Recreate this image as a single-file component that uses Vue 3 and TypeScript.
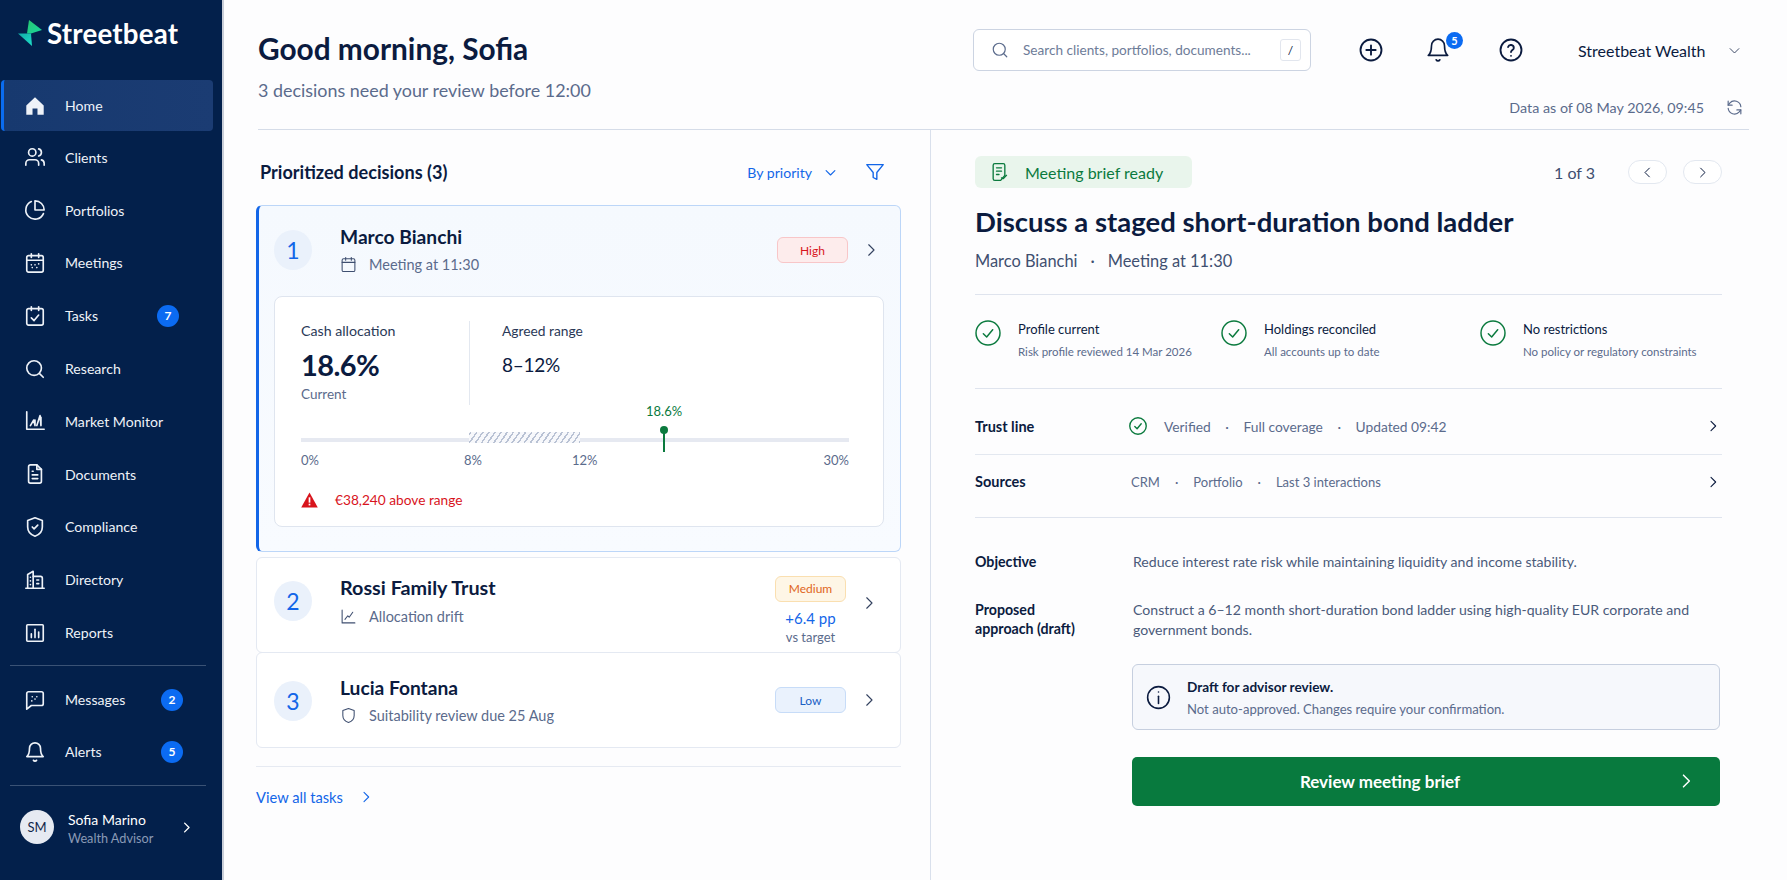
<script setup lang="ts">
import { h } from 'vue';

type IconProps = { d: string[]; size?: number; sw?: number; fill?: boolean };

// small stroke icon, all paths on a 24 grid
const Ico = (props: IconProps) =>
  h(
    'svg',
    {
      width: props.size ?? 20,
      height: props.size ?? 20,
      viewBox: '0 0 24 24',
      fill: props.fill ? 'currentColor' : 'none',
      stroke: props.fill ? 'none' : 'currentColor',
      'stroke-width': props.sw ?? 1.8,
      'stroke-linecap': 'round',
      'stroke-linejoin': 'round',
      style: { flex: 'none', display: 'block' },
    },
    props.d.map((p) => h('path', { d: p })),
  );

const calendarBox = 'M5 4h14a2 2 0 0 1 2 2v14a2 2 0 0 1-2 2H5a2 2 0 0 1-2-2V6a2 2 0 0 1 2-2z';
const chevronRight = ['M9 5l7 7-7 7'];
const chevronDown = ['M5 9l7 7 7-7'];
const circle = 'M3 12a9 9 0 1 0 18 0a9 9 0 1 0-18 0';
const bell = ['M6 8a6 6 0 0 1 12 0c0 7 3 9 3 9H3s3-2 3-9', 'M10.3 21a1.94 1.94 0 0 0 3.4 0'];
const tick = 'M8.5 12.5l2.5 2.5 4.5-5.5';

const icons = {
  home: ['M2.5 11.4 12 2.5l9.5 8.9v10.1h-6.8v-6.8H9.3v6.8H2.5z'],
  clients: [
    'M16 21v-2a4 4 0 0 0-4-4H6a4 4 0 0 0-4 4v2',
    'M5 7a4 4 0 1 0 8 0a4 4 0 1 0-8 0',
    'M22 21v-2a4 4 0 0 0-3-3.87',
    'M16 3.13a4 4 0 0 1 0 7.75',
  ],
  portfolios: ['M21.2 15.9A10 10 0 1 1 8 2.8', 'M22 12A10 10 0 0 0 12 2v10z'],
  meetings: [calendarBox, 'M8 2v4', 'M16 2v4', 'M3 9h18', 'M8 14h.01', 'M12 14h.01', 'M16 13h.01', 'M9 17h.01', 'M14 17h.01'],
  tasks: [calendarBox, 'M8 2v4', 'M16 2v4', 'M8 14l3 3 5-6'],
  research: ['M3 11a8 8 0 1 0 16 0a8 8 0 1 0-16 0', 'M21 21l-4.3-4.3'],
  market: ['M3 2v19h19', 'M7 17l3.5-6 1.5 6V11', 'M14 17l3.5-11 1 11V8'],
  documents: ['M14 2H7a2 2 0 0 0-2 2v16a2 2 0 0 0 2 2h10a2 2 0 0 0 2-2V7z', 'M14 2v5h5', 'M9 13h6', 'M9 17h6', 'M9 9h1'],
  compliance: ['M12 2l8 3v7c0 5-3.5 8.5-8 10-4.5-1.5-8-5-8-10V5z', 'M9 12l2 2 4-4'],
  directory: ['M2 21h20', 'M4 21V6l6-3.5V21', 'M10 8h8a2 2 0 0 1 2 2v11', 'M7 9h.01', 'M7 13h.01', 'M7 17h.01', 'M14 12h2', 'M14 16h2'],
  reports: ['M4 3h16a1 1 0 0 1 1 1v16a1 1 0 0 1-1 1H4a1 1 0 0 1-1-1V4a1 1 0 0 1 1-1z', 'M8 17v-4', 'M12 17V8', 'M16 17v-6'],
  messages: ['M21 16a2 2 0 0 1-2 2H8l-5 4V5a2 2 0 0 1 2-2h14a2 2 0 0 1 2 2z', 'M9 8.5h.01', 'M14 8.5h.01', 'M12 11h.01', 'M8.5 13h.01'],
};

const mainNav = [
  { label: 'Home', d: icons.home, active: true, fill: true },
  { label: 'Clients', d: icons.clients },
  { label: 'Portfolios', d: icons.portfolios },
  { label: 'Meetings', d: icons.meetings },
  { label: 'Tasks', d: icons.tasks, badge: '7' },
  { label: 'Research', d: icons.research },
  { label: 'Market Monitor', d: icons.market },
  { label: 'Documents', d: icons.documents },
  { label: 'Compliance', d: icons.compliance },
  { label: 'Directory', d: icons.directory },
  { label: 'Reports', d: icons.reports },
];

const subNav = [
  { label: 'Messages', d: icons.messages, badge: '2' },
  { label: 'Alerts', d: bell, badge: '5' },
];

const checks = [
  { title: 'Profile current', sub: 'Risk profile reviewed 14 Mar 2026' },
  { title: 'Holdings reconciled', sub: 'All accounts up to date' },
  { title: 'No restrictions', sub: 'No policy or regulatory constraints' },
];
</script>

<template>
  <div class="app">
    <aside class="sidebar">
      <div class="brand">
        <svg class="logo" width="26" height="28" viewBox="0 0 26 28">
          <defs>
            <linearGradient id="logoTop" x1="0" y1="0" x2="1" y2="1">
              <stop offset="0" stop-color="#27c66f" />
              <stop offset="1" stop-color="#19d6a0" />
            </linearGradient>
            <linearGradient id="logoBottom" x1="0" y1="0" x2="1" y2="1">
              <stop offset="0" stop-color="#10a9a5" />
              <stop offset="1" stop-color="#1fe0c8" />
            </linearGradient>
          </defs>
          <path d="M12 1 25 11 14 14.5H10z" fill="url(#logoTop)" />
          <path d="M1 14.5H14L15 27z" fill="url(#logoBottom)" />
        </svg>
        <span class="brand-name">Streetbeat</span>
      </div>

      <nav class="nav">
        <a v-for="item in mainNav" :key="item.label" class="nav-item" :class="{ active: item.active }">
          <Ico :d="item.d" :size="22" :fill="item.fill" />
          <span class="nav-label">{{ item.label }}</span>
          <span v-if="item.badge" class="nav-badge tasks-badge">{{ item.badge }}</span>
        </a>
      </nav>
      <div class="side-rule first"></div>
      <nav class="nav">
        <a v-for="item in subNav" :key="item.label" class="nav-item short">
          <Ico :d="item.d" :size="22" />
          <span class="nav-label">{{ item.label }}</span>
          <span class="nav-badge">{{ item.badge }}</span>
        </a>
      </nav>
      <div class="side-rule second"></div>
      <div class="user">
        <div class="avatar">SM</div>
        <div class="user-text">
          <div class="user-name">Sofia Marino</div>
          <div class="user-role">Wealth Advisor</div>
        </div>
        <Ico :d="chevronRight" :size="15" :sw="2.2" />
      </div>
    </aside>

    <main class="main">
      <header class="header">
        <div class="greet">
          <h1>Good morning, Sofia</h1>
          <p>3 decisions need your review before 12:00</p>
        </div>
        <div class="header-right">
          <div class="toolbar">
            <div class="search">
              <Ico class="search-icon" :d="icons.research" :size="18" :sw="1.6" />
              <span class="search-text">Search clients, portfolios, documents...</span>
              <span class="kbd">/</span>
            </div>
            <Ico class="tool plus" :d="[circle, 'M12 8v8', 'M8 12h8']" :size="28" :sw="1.6" />
            <div class="bell-wrap">
              <Ico :d="bell" :size="26" :sw="1.5" />
              <span class="bell-badge">5</span>
            </div>
            <Ico class="tool help" :d="[circle, 'M9.5 9.5a2.5 2.5 0 0 1 4.9.7c0 1.7-2.4 2-2.4 3.6', 'M12 17h.01']" :size="28" :sw="1.6" />
            <span class="org">Streetbeat Wealth</span>
            <Ico class="org-chevron" :d="chevronDown" :size="15" :sw="1.5" />
          </div>
          <div class="data-row">
            <span>Data as of 08 May 2026, 09:45</span>
            <Ico
              :d="['M20 11a8 8 0 0 0-14-4.5L4 9', 'M4 4v5h5', 'M4 13a8 8 0 0 0 14 4.5L20 15', 'M20 20v-5h-5']"
              :size="19"
              :sw="1.5"
            />
          </div>
        </div>
      </header>

      <div class="panes">
        <section class="left">
          <div class="left-head">
            <h2>Prioritized decisions (3)</h2>
            <div class="sort">
              <span>By priority</span>
              <Ico :d="chevronDown" :size="15" />
              <Ico class="filter" :d="['M3 4h18l-7 8.5V20l-4-2v-5.5z']" :size="22" :sw="1.5" />
            </div>
          </div>

          <article class="card first-card">
            <div class="card-row">
              <div class="rank">1</div>
              <div class="who">
                <div class="who-name">Marco Bianchi</div>
                <div class="who-sub">
                  <Ico :d="[calendarBox, 'M8 2v4', 'M16 2v4', 'M3 9h18']" :size="17" :sw="1.5" />
                  <span>Meeting at 11:30</span>
                </div>
              </div>
              <div class="side">
                <span class="prio high">High</span>
              </div>
              <Ico class="card-chevron" :d="chevronRight" :size="18" :sw="1.5" />
            </div>

            <div class="alloc">
              <div class="metrics">
                <div class="metric cash">
                  <div class="metric-label">Cash allocation</div>
                  <div class="metric-big">18.6%</div>
                  <div class="metric-note">Current</div>
                </div>
                <div class="metric range">
                  <div class="metric-label">Agreed range</div>
                  <div class="metric-mid">8–12%</div>
                </div>
              </div>
              <div class="slider">
                <span class="pin-label">18.6%</span>
                <div class="track"></div>
                <div class="hatch"></div>
                <div class="pin"></div>
              </div>
              <div class="ticks">
                <span>0%</span>
                <span>8%</span>
                <span>12%</span>
                <span>30%</span>
              </div>
              <div class="warn">
                <svg width="17" height="16" viewBox="0 0 16 15">
                  <path d="M8 .5 15.8 14.5H.2z" fill="#d8141c" />
                  <rect x="7.2" y="5" width="1.6" height="5" fill="#fff" />
                  <rect x="7.2" y="11" width="1.6" height="1.6" fill="#fff" />
                </svg>
                <span>€38,240 above range</span>
              </div>
            </div>
          </article>

          <article class="card second-card">
            <div class="rank">2</div>
            <div class="who">
              <div class="who-name">Rossi Family Trust</div>
              <div class="who-sub">
                <Ico :d="['M3 3v18h18', 'M7 16l4-5 2 2 5-7']" :size="17" :sw="1.5" />
                <span>Allocation drift</span>
              </div>
            </div>
            <div class="side">
              <span class="prio medium">Medium</span>
              <span class="delta">+6.4 pp</span>
              <span class="delta-note">vs target</span>
            </div>
            <Ico class="card-chevron" :d="chevronRight" :size="18" :sw="1.5" />
          </article>

          <article class="card third-card">
            <div class="rank">3</div>
            <div class="who">
              <div class="who-name">Lucia Fontana</div>
              <div class="who-sub">
                <Ico :d="['M12 2l8 3v7c0 5-3.5 8.5-8 10-4.5-1.5-8-5-8-10V5z']" :size="17" :sw="1.5" />
                <span>Suitability review due 25 Aug</span>
              </div>
            </div>
            <div class="side">
              <span class="prio low">Low</span>
            </div>
            <Ico class="card-chevron" :d="chevronRight" :size="18" :sw="1.5" />
          </article>

          <div class="view-all">
            <span>View all tasks</span>
            <Ico :d="chevronRight" :size="16" :sw="1.6" />
          </div>
        </section>

        <section class="right">
          <div class="right-head">
            <div class="ready">
              <Ico
                :d="['M7 2h10a2 2 0 0 1 2 2v12l-5 6H7a2 2 0 0 1-2-2V4a2 2 0 0 1 2-2z', 'M9 7h6', 'M9 11h6', 'M9 15h3', 'M15 19l2 1 4-4']"
                :size="20"
                :sw="1.6"
              />
              <span>Meeting brief ready</span>
            </div>
            <div class="pager">
              <span>1 of 3</span>
              <button class="page-btn"><Ico :d="['M15 5l-7 7 7 7']" :size="15" :sw="1.6" /></button>
              <button class="page-btn"><Ico :d="chevronRight" :size="15" :sw="1.6" /></button>
            </div>
          </div>

          <h2 class="brief-title">Discuss a staged short-duration bond ladder</h2>
          <div class="brief-sub">
            <span>Marco Bianchi</span><i>·</i><span>Meeting at 11:30</span>
          </div>

          <div class="checks">
            <div v-for="c in checks" :key="c.title" class="check">
              <Ico class="ok" :d="[circle, tick]" :size="32" :sw="1.1" />
              <div>
                <div class="check-title">{{ c.title }}</div>
                <div class="check-sub">{{ c.sub }}</div>
              </div>
            </div>
          </div>

          <div class="line-row trust">
            <div class="line-label">Trust line</div>
            <div class="line-body">
              <Ico class="ok" :d="[circle, tick]" :size="22" :sw="1.5" />
              <span class="after-ok">Verified</span><i>·</i><span>Full coverage</span><i>·</i><span>Updated 09:42</span>
            </div>
            <Ico class="line-chevron" :d="chevronRight" :size="16" :sw="1.6" />
          </div>
          <div class="line-row sources">
            <div class="line-label">Sources</div>
            <div class="line-body src">
              <span>CRM</span><i>·</i><span>Portfolio</span><i>·</i><span>Last 3 interactions</span>
            </div>
            <Ico class="line-chevron" :d="chevronRight" :size="16" :sw="1.6" />
          </div>

          <div class="detail objective">
            <div class="detail-label">Objective</div>
            <div class="detail-text">Reduce interest rate risk while maintaining liquidity and income stability.</div>
          </div>
          <div class="detail approach">
            <div class="detail-label">Proposed<br />approach (draft)</div>
            <div class="detail-text">Construct a 6–12 month short-duration bond ladder using high-quality EUR corporate and government bonds.</div>
          </div>

          <div class="note">
            <Ico :d="[circle, 'M12 11v6', 'M12 7.5h.01']" :size="29" :sw="1.3" />
            <div class="note-body">
              <div class="note-title">Draft for advisor review.</div>
              <div class="note-sub">Not auto-approved. Changes require your confirmation.</div>
            </div>
          </div>

          <button class="review">
            <span>Review meeting brief</span>
            <Ico class="review-chevron" :d="chevronRight" :size="20" :sw="1.8" />
          </button>
        </section>
      </div>
    </main>
  </div>
</template>

<style>
html,
body {
  margin: 0;
  background: #fdfdfe;
}
</style>

<style scoped>
.app {
  display: flex;
  width: 1787px;
  height: 880px;
  overflow: hidden;
  font-family: Lato, "Open Sans", sans-serif;
  color: #0b1b3f;
  background: #fdfdfe;
}

h1,
h2,
p {
  margin: 0;
}

/* sidebar */
.sidebar {
  flex: none;
  box-sizing: border-box;
  width: 224px;
  height: 880px;
  background: #03204b;
  border-right: 2px solid #c9ced8;
  color: #fff;
}

.brand {
  display: flex;
  align-items: center;
  height: 80px;
  padding: 0 0 14px 17px;
  box-sizing: border-box;
}

.brand-name {
  margin-left: 4px;
  font-size: 27.7px;
  font-weight: 700;
  letter-spacing: 0.2px;
}

.nav {
  display: flex;
  flex-direction: column;
}

.nav-item {
  display: flex;
  align-items: center;
  box-sizing: border-box;
  height: 52.8px;
  padding-left: 24px;
  font-size: 14.1px;
  color: #eef2f8;
}

.nav-item.short {
  height: 52px;
}

.nav-item.active {
  width: 212px;
  height: 51px;
  margin-left: 1px;
  padding-left: 20px;
  background: linear-gradient(90deg, #17396f, #1b3c73);
  border-left: 3px solid #0a6cf0;
  border-radius: 4px;
}

.nav-label {
  margin-left: 19px;
}

.nav-badge {
  display: flex;
  align-items: center;
  justify-content: center;
  width: 22px;
  height: 22px;
  margin-left: auto;
  margin-right: 39px;
  border-radius: 50%;
  background: #0b6bf2;
  font-size: 12px;
  font-weight: 700;
  color: #fff;
}

.tasks-badge {
  margin-right: 43px;
}

.side-rule {
  height: 1px;
  margin-left: 10px;
  width: 196px;
  background: #3a5275;
}

.side-rule.first {
  margin-top: 6px;
  margin-bottom: 8px;
}

.side-rule.second {
  margin-top: 7px;
}

.user {
  display: flex;
  align-items: center;
  padding: 22px 0 0 20px;
}

.avatar {
  display: flex;
  align-items: center;
  justify-content: center;
  width: 34px;
  height: 34px;
  border-radius: 50%;
  background: #e6eaf2;
  color: #12264b;
  font-size: 13px;
}

.user-text {
  width: 111px;
  margin: 3px 0 0 14px;
}

.user-name {
  font-size: 14px;
  line-height: 18px;
}

.user-role {
  font-size: 12.7px;
  line-height: 18px;
  color: #8a9ab5;
}

/* main */
.main {
  flex: 1;
  min-width: 0;
  padding: 0 38px 0 34px;
  display: flex;
  flex-direction: column;
}

.header {
  flex: none;
  display: flex;
  justify-content: space-between;
  box-sizing: border-box;
  height: 130px;
  border-bottom: 1px solid #d5dce8;
}

.greet {
  padding-top: 29px;
}

.greet h1 {
  font-size: 29.8px;
  line-height: 40px;
  font-weight: 700;
  color: #0b1b3f;
}

.greet p {
  margin-top: 10px;
  font-size: 17.9px;
  line-height: 22px;
  color: #5b6b8c;
}

.header-right {
  width: 776px;
  padding-top: 29px;
}

.toolbar {
  display: flex;
  align-items: center;
  height: 42px;
}

.search {
  display: flex;
  align-items: center;
  box-sizing: border-box;
  width: 338px;
  height: 42px;
  padding: 0 9px 0 17px;
  background: #fff;
  border: 1.5px solid #ccd4e2;
  border-radius: 6px;
  color: #5b6b8c;
}

.search-text {
  margin-left: 14px;
  font-size: 13.6px;
  color: #6e7c98;
}

.kbd {
  display: flex;
  align-items: center;
  justify-content: center;
  width: 19px;
  height: 20px;
  margin-left: auto;
  border: 1px solid #e2e6ee;
  border-radius: 3px;
  font-size: 12px;
  color: #0b1b3f;
}

.plus {
  margin-left: 46px;
}

.bell-wrap {
  position: relative;
  margin-left: 40px;
}

.bell-badge {
  position: absolute;
  top: -5px;
  left: 21px;
  display: flex;
  align-items: center;
  justify-content: center;
  width: 17px;
  height: 17px;
  border-radius: 50%;
  background: #0b6bf2;
  color: #fff;
  font-size: 11px;
  font-weight: 700;
}

.help {
  margin-left: 46px;
}

.org {
  margin-left: 53px;
  font-size: 16px;
}

.org-chevron {
  margin-left: 21px;
  color: #33415f;
}

.data-row {
  display: flex;
  align-items: center;
  justify-content: flex-end;
  gap: 21px;
  margin-top: 26px;
  padding-right: 5px;
  height: 20px;
  font-size: 14.3px;
  color: #5b6b8c;
}

.panes {
  flex: 1;
  display: flex;
  min-height: 0;
}

/* left pane */
.left {
  flex: none;
  box-sizing: border-box;
  width: 673px;
  padding: 30px 31px 0 0;
  border-right: 1px solid #d9e0ec;
}

.left-head {
  display: flex;
  align-items: center;
  justify-content: space-between;
  height: 24px;
  padding: 0 13px 0 2px;
}

.left-head h2 {
  font-size: 18.1px;
  font-weight: 700;
}

.sort {
  display: flex;
  align-items: center;
  font-size: 14.1px;
  color: #1366e8;
}

.sort svg:nth-of-type(1) {
  margin-left: 11px;
}

.filter {
  margin-left: 26px;
}

.card {
  box-sizing: border-box;
  width: 645px;
  margin-left: -2px;
  background: #fff;
  border: 1px solid #e4e9f2;
  border-radius: 6px;
}

.first-card {
  height: 347px;
  margin-top: 21px;
  padding: 18px 16px 0 15px;
  background: linear-gradient(180deg, #f5f9fe, #f8fbff);
  border: 1px solid #bcd6f8;
  border-left: 3px solid #1366e8;
}

.card-row,
.second-card,
.third-card {
  display: flex;
  align-items: center;
}

.card-row {
  height: 52px;
}

.second-card {
  height: 96px;
  margin-top: 5px;
  padding: 0 22px 0 17px;
}

.third-card {
  height: 96px;
  margin-top: -1px;
  padding: 0 22px 0 17px;
}

.rank {
  flex: none;
  display: flex;
  align-items: center;
  justify-content: center;
  width: 38px;
  height: 40px;
  border-radius: 50%;
  background: #eaf1fb;
  color: #1366e8;
  font-size: 23px;
}

.second-card .rank {
  margin-top: -8px;
}

.third-card .rank {
  margin-top: 2px;
}

.who {
  flex: 1;
  margin-left: 28px;
}

.second-card .who {
  margin-top: -8px;
}

.third-card .who {
  margin-top: 2px;
}

.who-name {
  font-size: 19.2px;
  line-height: 24px;
  font-weight: 700;
  color: #0b1b3f;
}

.second-card .who-name {
  font-size: 19.8px;
}

.who-sub {
  display: flex;
  align-items: center;
  gap: 12px;
  margin-top: 5px;
  font-size: 14.5px;
  line-height: 22px;
  color: #5b6b8c;
}

.second-card .who-sub {
  margin-top: 7px;
}

.who-sub svg {
  color: #3f4f70;
}

.side {
  display: flex;
  flex-direction: column;
  align-items: center;
  width: 71px;
}

.second-card .side {
  margin-top: 11px;
}

.prio {
  box-sizing: border-box;
  display: flex;
  align-items: center;
  justify-content: center;
  width: 71px;
  height: 26px;
  border-radius: 6px;
  font-size: 12px;
  border: 1px solid;
}

.high {
  background: #fdecec;
  border-color: #f8c6c8;
  color: #d8141c;
}

.medium {
  background: #fef6e6;
  border-color: #fadfb0;
  color: #e0651a;
}

.low {
  background: #eaf2fd;
  border-color: #c7dcf8;
  color: #1a5fc4;
}

.delta {
  margin-top: 6px;
  font-size: 15px;
  line-height: 20px;
  color: #1366e8;
}

.delta-note {
  font-size: 13px;
  line-height: 18px;
  color: #5b6b8c;
}

.card-chevron {
  margin-left: 14px;
  color: #33415f;
}

.first-card .card-chevron {
  margin-right: 4px;
}

.second-card .card-chevron {
  margin-bottom: 4px;
}

.alloc {
  box-sizing: border-box;
  height: 231px;
  margin-top: 20px;
  padding: 24px 34px 0 26px;
  background: #fff;
  border: 1.5px solid #dfe5ef;
  border-radius: 8px;
}

.metrics {
  display: flex;
  height: 84px;
}

.metric.cash {
  box-sizing: border-box;
  width: 169px;
  border-right: 1px solid #e3e8f0;
}

.metric.range {
  padding-left: 32px;
}

.metric-label {
  font-size: 14.2px;
  line-height: 20px;
  color: #2a3957;
}

.range .metric-label {
  font-size: 13.8px;
}

.metric-big {
  margin-top: 4px;
  font-size: 29px;
  line-height: 40px;
  font-weight: 700;
  letter-spacing: -0.6px;
}

.metric-mid {
  margin-top: 4px;
  font-size: 19px;
  line-height: 40px;
  letter-spacing: -0.3px;
}

.metric-note {
  font-size: 13.5px;
  line-height: 18px;
  color: #5b6b8c;
}

.slider {
  position: relative;
  height: 47px;
}

.track {
  position: absolute;
  left: 0;
  right: 0;
  top: 33px;
  height: 4px;
  background: #e6e9f1;
}

.hatch {
  position: absolute;
  left: 168px;
  top: 27px;
  width: 111px;
  height: 11px;
  background: repeating-linear-gradient(-55deg, #b9c2d4 0 1.5px, transparent 1.5px 5px), #f7f8fb;
}

.pin {
  position: absolute;
  left: 359px;
  top: 21px;
  width: 8px;
  height: 8px;
  border-radius: 50%;
  background: #0b7a3e;
}

.pin::after {
  content: "";
  position: absolute;
  left: 3px;
  top: 6px;
  width: 2px;
  height: 20px;
  background: #0b7a3e;
}

.pin-label {
  position: absolute;
  left: 345px;
  top: -3px;
  font-size: 13px;
  line-height: 18px;
  color: #0b7a3e;
}

.ticks {
  display: grid;
  grid-template-columns: 163px 108px 1fr auto;
  font-size: 13px;
  line-height: 16px;
  color: #5b6b8c;
}

.warn {
  display: flex;
  align-items: center;
  gap: 17px;
  margin-top: 22px;
  font-size: 13.7px;
  line-height: 20px;
  color: #d8141c;
}

.view-all {
  display: flex;
  align-items: center;
  gap: 15px;
  width: 645px;
  margin: 18px 0 0 -2px;
  box-sizing: border-box;
  height: 60px;
  border-top: 1px solid #e6eaf2;
  font-size: 14.7px;
  color: #1366e8;
}

/* right pane */
.right {
  flex: 1;
  min-width: 0;
  padding: 26px 27px 0 44px;
}

.right-head {
  display: flex;
  align-items: center;
  justify-content: space-between;
  height: 32px;
}

.ready {
  display: flex;
  align-items: center;
  gap: 16px;
  box-sizing: border-box;
  width: 217px;
  height: 32px;
  padding-left: 14px;
  border-radius: 6px;
  background: #e9f5ec;
  color: #0b7a3e;
  font-size: 16px;
}

.pager {
  display: flex;
  align-items: center;
  font-size: 16px;
  color: #3f4f70;
}

.page-btn {
  display: flex;
  align-items: center;
  justify-content: center;
  width: 39px;
  height: 24px;
  padding: 0;
  margin-left: 16px;
  border: 1px solid #e3e8f0;
  border-radius: 12px;
  background: #fff;
  color: #0b1b3f;
}

.page-btn:first-of-type {
  margin-left: 33px;
}

.brief-title {
  margin-top: 15px;
  font-size: 27.5px;
  line-height: 38px;
  font-weight: 700;
}

.brief-sub {
  display: flex;
  margin-top: 9px;
  padding-bottom: 22px;
  border-bottom: 1px solid #dfe4ee;
  font-size: 16.4px;
  line-height: 22px;
  color: #3f4f70;
}

.brief-sub i {
  font-style: normal;
  margin: 0 13px;
}

.line-body i {
  font-style: normal;
  margin: 0 14.5px;
}

.line-body.src i {
  margin: 0 15px;
}

.checks {
  display: grid;
  grid-template-columns: 246px 259px 1fr;
  box-sizing: border-box;
  height: 94px;
  padding-top: 22px;
  border-bottom: 1px solid #dfe4ee;
}

.check {
  display: flex;
  gap: 14px;
  margin-left: -3px;
}

.ok {
  color: #0b7a3e;
}

.check-title {
  margin-top: 2px;
  font-size: 13px;
  line-height: 20px;
  color: #0b1b3f;
}

.check-sub {
  margin-top: 4px;
  font-size: 11.5px;
  line-height: 18px;
  color: #5b6b8c;
}

.line-row {
  display: flex;
  align-items: center;
  box-sizing: border-box;
  border-bottom: 1px solid #e3e8f0;
}

.line-chevron {
  margin-right: 1px;
}

.trust {
  height: 66px;
  padding-top: 9px;
}

.sources {
  height: 63px;
  padding-bottom: 9px;
  border-bottom-color: #dfe4ee;
}

.line-label {
  flex: none;
  width: 152px;
  font-size: 14.5px;
  font-weight: 700;
}

.line-body {
  flex: 1;
  display: flex;
  align-items: center;
  font-size: 13.8px;
  color: #5b6b8c;
}

.line-body.src {
  padding-left: 4px;
  font-size: 13px;
}

.after-ok {
  margin-left: 15px;
}

.detail {
  display: flex;
}

.objective {
  margin-top: 34px;
}

.approach {
  margin-top: 28px;
}

.detail-label {
  flex: none;
  width: 158px;
  font-size: 14.2px;
  line-height: 19px;
  font-weight: 700;
}

.detail-text {
  font-size: 14.1px;
  line-height: 20px;
  color: #4a5a7a;
}

.note {
  display: flex;
  align-items: center;
  gap: 14px;
  box-sizing: border-box;
  height: 66px;
  margin: 24px 2px 0 157px;
  padding-left: 11px;
  background: #f6f8fc;
  border: 1.5px solid #c6cfdf;
  border-radius: 6px;
}

.note-body {
  margin-top: 2px;
}

.note-title {
  font-size: 13.6px;
  line-height: 18px;
  font-weight: 700;
}

.note-sub {
  margin-top: 4px;
  font-size: 13.1px;
  line-height: 18px;
  color: #5b6b8c;
}

.review {
  position: relative;
  display: flex;
  align-items: center;
  justify-content: center;
  box-sizing: border-box;
  width: 588px;
  height: 49px;
  margin: 27px 0 0 157px;
  padding: 0 92px 0 0;
  border: none;
  border-radius: 5px;
  background: #087a3e;
  color: #fff;
  font-family: inherit;
  font-size: 17px;
  font-weight: 700;
}

.review-chevron {
  position: absolute;
  right: 24px;
  top: 14px;
}
</style>
